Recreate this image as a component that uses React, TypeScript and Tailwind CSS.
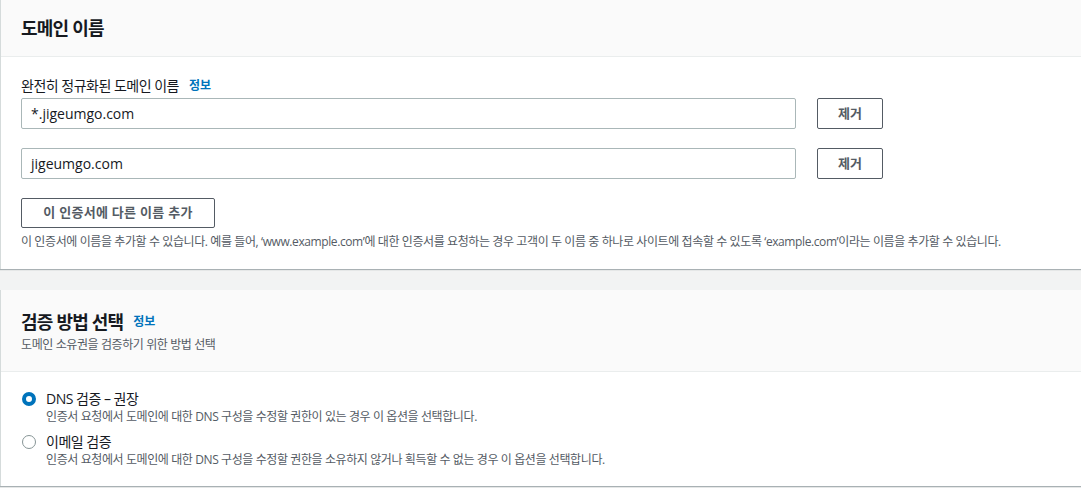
import React from "react";

const font = { fontFamily: '"Open Sans", "Noto Sans CJK KR", sans-serif' };

function Radio({ checked }: { checked: boolean }) {
  return checked ? (
    <span className="mt-[3px] box-border h-[14px] w-[14px] shrink-0 rounded-full border-[4px] border-[#0073bb] bg-white" />
  ) : (
    <span className="mt-[3px] box-border h-[14px] w-[14px] shrink-0 rounded-full border border-[#879596] bg-white" />
  );
}

function Row({ value }: { value: string }) {
  return (
    <div className="flex items-center">
      <div className="flex h-[31px] w-[775px] items-center rounded-[2px] border border-[#aab7b8] bg-white px-[9px] text-[14px] text-[#16191f]">
        {value}
      </div>
      <button className="ml-[21px] h-[31px] w-[66px] rounded-[2px] border border-[#545b64] bg-white text-[13px] font-bold text-[#545b64]">
        제거
      </button>
    </div>
  );
}

export default function App() {
  return (
    <div className="h-[488px] w-[1081px] overflow-hidden bg-[#f2f3f3]" style={font}>
      <div className="w-[1090px] border-l border-[#d5dbdb] bg-white shadow-[0_1px_1px_0_rgba(0,28,36,0.3)]">
        <div className="flex h-[57px] items-center border-b border-[#eaeded] bg-[#fafafa] pl-[20px]">
          <h2 className="text-[18px] font-bold tracking-[-0.8px] text-[#16191f]">도메인 이름</h2>
        </div>
        <div className="h-[212px] pl-[20px] pt-[19px]">
          <div className="flex items-center text-[14px] leading-[20px] tracking-[-0.5px] text-[#16191f]">
            완전히 정규화된 도메인 이름
            <span className="ml-[10px] text-[12px] font-bold tracking-normal text-[#0073bb]">정보</span>
          </div>
          <div className="mt-[2px] flex flex-col gap-[19px]">
            <Row value="*.jigeumgo.com" />
            <Row value="jigeumgo.com" />
          </div>
          <button className="mt-[19px] h-[30px] w-[194px] rounded-[2px] border border-[#545b64] bg-white text-[13px] font-bold tracking-[0.3px] text-[#545b64]">
            이 인증서에 다른 이름 추가
          </button>
          <p className="mt-[6px] text-[12px] leading-[16px] tracking-[-0.4px] text-[#545b64]">
            이 인증서에 이름을 추가할 수 있습니다. 예를 들어, ‘www.example.com’에 대한 인증서를 요청하는 경우 고객이 두 이름 중 하나로 사이트에 접속할 수 있도록 ‘example.com’이라는 이름을 추가할 수 있습니다.
          </p>
        </div>
      </div>
      <div className="mt-[21px] w-[1090px] border-l border-[#d5dbdb] bg-white shadow-[0_1px_1px_0_rgba(0,28,36,0.3)]">
        <div className="h-[82px] border-b border-[#eaeded] bg-[#fafafa] pl-[20px] pt-[20px]">
          <div className="flex items-center">
            <h2 className="text-[18px] font-bold leading-[24px] tracking-[-0.8px] text-[#16191f]">검증 방법 선택</h2>
            <span className="ml-[10px] text-[12px] font-bold text-[#0073bb]">정보</span>
          </div>
          <p className="mt-[3px] text-[12px] leading-[16px] tracking-[-0.4px] text-[#545b64]">도메인 소유권을 검증하기 위한 방법 선택</p>
        </div>
        <div className="h-[114px] pl-[21px] pt-[17px]">
          <div className="flex gap-[10px]">
            <Radio checked />
            <div>
              <div className="text-[14px] leading-[20px] tracking-[-0.5px] text-[#16191f]">DNS 검증 – 권장</div>
              <div className="text-[12px] leading-[16px] tracking-[-0.4px] text-[#545b64]">
                인증서 요청에서 도메인에 대한 DNS 구성을 수정할 권한이 있는 경우 이 옵션을 선택합니다.
              </div>
            </div>
          </div>
          <div className="mt-[7px] flex gap-[10px]">
            <Radio checked={false} />
            <div>
              <div className="text-[14px] leading-[20px] tracking-[-0.5px] text-[#16191f]">이메일 검증</div>
              <div className="text-[12px] leading-[16px] tracking-[-0.4px] text-[#545b64]">
                인증서 요청에서 도메인에 대한 DNS 구성을 수정할 권한을 소유하지 않거나 획득할 수 없는 경우 이 옵션을 선택합니다.
              </div>
            </div>
          </div>
        </div>
      </div>
    </div>
  );
}
